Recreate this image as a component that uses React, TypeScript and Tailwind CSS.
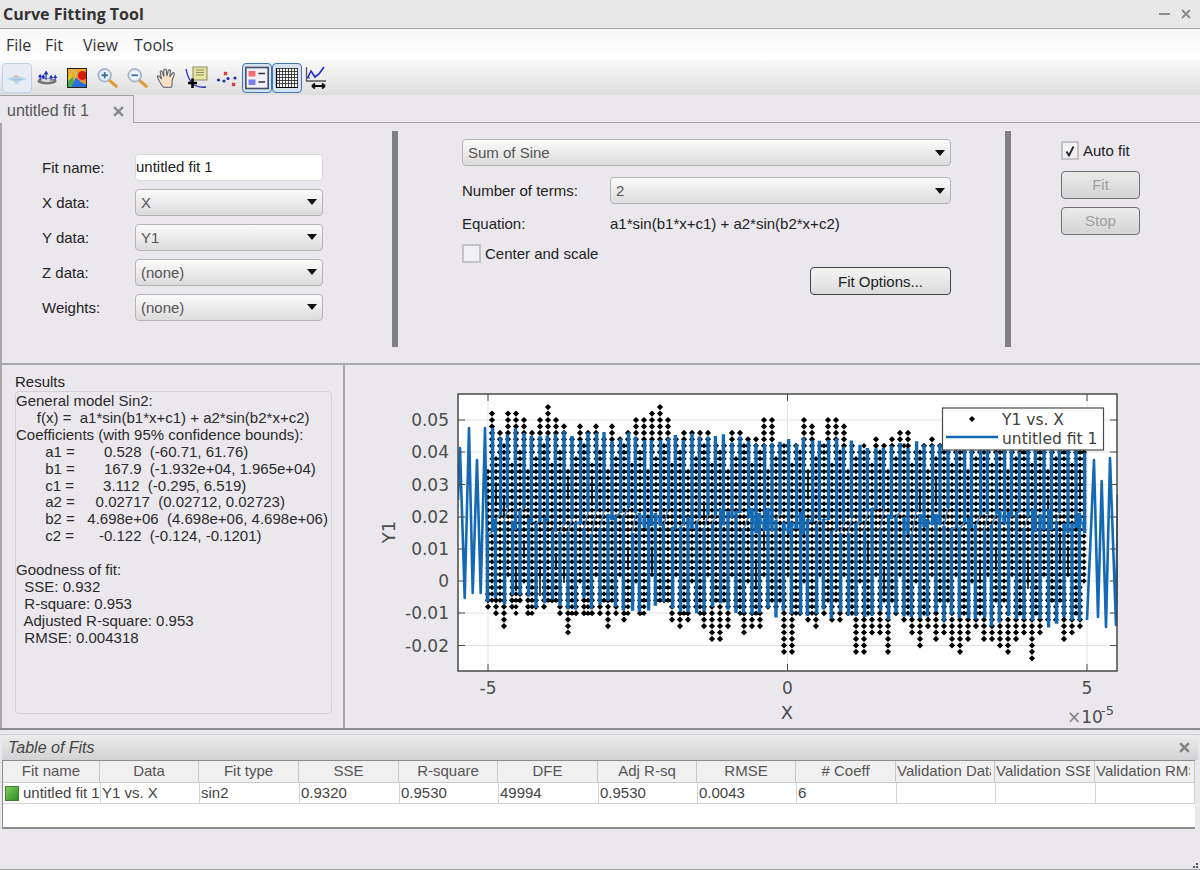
import React from "react";

const tops: number[] = [26,23,26,26,25,23,25,27,25,24,22,24,23,24,22,24,22,23,25,25,26,27,25,22,23,23,23,23,21,21,23,23,22,22,25,25,21,21,21,25,24,21,25,25,24,21,20,20,22,21,22,23,23,20,21,22,21,21,21,21,21,21,21,21,21,21,21,21,21,21,21,21,21,21,21];
const bottoms: number[] = [4,5,7,4,3,5,4,4,3,5,8,5,5,5,5,7,5,6,3,5,3,3,3,6,7,6,4,7,9,9,7,4,8,7,7,4,4,11,11,5,6,7,5,6,6,5,11,11,8,8,11,5,6,8,10,7,9,8,10,11,9,7,9,9,10,11,9,8,12,8,6,6,9,8,7];

const levelY = (n: number) => 581 - n * 6.44;
const diamond = (x: number, y: number, r = 3.1) => `M${x} ${y - r}L${x + r} ${y}L${x} ${y + r}L${x - r} ${y}Z`;
const hash = (i: number, m: number) => (i * 37 + 11 + ((i * i) % 7) * 5) % m;

function buildDots() {
  let d = "";
  tops.forEach((t, j) => {
    const x = 492 + 8 * j;
    const low = 1 - hash(j, 7);
    for (let n = t; n >= low; n--) d += diamond(x, levelY(n), n > 19 ? 3.1 : 2.7);
  });
  bottoms.forEach((b, k) => {
    const x = 488 + 8 * k;
    const high = 17 + hash(k + 2, 5);
    for (let n = -b; n <= high; n++) d += diamond(x, levelY(n), n < -1 ? 3.1 : 2.7);
  });
  return d;
}

function buildDarkBars() {
  let d = "";
  for (let j = 0; j < 75; j++) {
    const h = hash(j, 13);
    if (h < 5) {
      const x = 488 + 8 * j + (h % 2 ? 0 : 4);
      const y0 = (h % 2 ? 470 : 530) + ((j * 53) % 40);
      d += `M${x} ${y0}V${y0 + 16 + h * 3}`;
    }
  }
  return d;
}

function buildBars() {
  let thick = "";
  let thin = "";
  for (let j = 0; j < 75; j++) {
    const xj = 492 + 8 * j;
    const xk = 488 + 8 * j;
    const top = 428 + (j / 75) * 16 + hash(j, 11);
    const midTop = 508 + hash(j + 3, 27);
    const bottom = 594 + (j / 75) * 24 + hash(j + 5, 13);
    const midBottom = 534 - hash(j + 7, 27);
    const shift = (hash(j, 3) - 1) * 0.6;
    thick += `M${xj + shift} ${top.toFixed(1)}V${midTop}`;
    thick += `M${xk - shift} ${bottom.toFixed(1)}V${midBottom}`;
    thin += `M${xk} ${midBottom}L${xj} ${midTop}`;
  }
  return { thick, thin };
}

const bars = buildBars();
const leftEdge = "M458 500L460 448L464.7 598L469 428L472.7 593L477 460L480.7 593L485 428L488 600";
const rightEdge = "M1087 620L1094 460L1098 617L1101.7 481L1106 627L1110 458L1116 625L1118 495";

const dotsPath = buildDots();
const barsPath = buildDarkBars();

const yTicks: [string, number][] = [["0.05", 420], ["0.04", 452], ["0.03", 484.5], ["0.02", 517], ["0.01", 549], ["0", 581], ["-0.01", 613], ["-0.02", 645.5]];
const xTicks: [string, number][] = [["-5", 488], ["0", 787.5], ["5", 1087]];

function Chart() {
  const font = "DejaVu Sans, sans-serif";
  return (
    <svg viewBox="345 365 855 363" className="block w-[855px] h-[363px]">
      <rect x="458" y="394" width="659" height="277" fill="#ffffff" />
      {yTicks.map(([, y]) => <line key={y} x1="458" x2="1117" y1={y} y2={y} stroke="#e2e2e2" strokeWidth="1" />)}
      {xTicks.map(([, x]) => <line key={x} x1={x} x2={x} y1="394" y2="671" stroke="#e2e2e2" strokeWidth="1" />)}
      <clipPath id="axes"><rect x="458" y="394" width="660" height="277" /></clipPath>
      <g clipPath="url(#axes)">
        <path d={dotsPath} fill="#000000" />
        <path d={barsPath} stroke="#111111" strokeWidth="1.6" fill="none" />
        <path d={bars.thin} stroke="#3f86c8" strokeWidth="1.6" fill="none" />
        <path d={bars.thick} stroke="#1469b4" strokeWidth="3.4" fill="none" />
        <path d={leftEdge} stroke="#1469b4" strokeWidth="2.6" fill="none" strokeLinejoin="round" />
        <path d={rightEdge} stroke="#1469b4" strokeWidth="2.6" fill="none" strokeLinejoin="round" />
      </g>
      <rect x="458" y="394" width="659" height="277" fill="none" stroke="#4a4a4a" strokeWidth="1.5" />
      {yTicks.map(([, y]) => (
        <g key={y}>
          <line x1="458" x2="465" y1={y} y2={y} stroke="#4a4a4a" />
          <line x1="1110" x2="1117" y1={y} y2={y} stroke="#4a4a4a" />
        </g>
      ))}
      {xTicks.map(([, x]) => (
        <g key={x}>
          <line x1={x} x2={x} y1="394" y2="401" stroke="#4a4a4a" />
          <line x1={x} x2={x} y1="664" y2="671" stroke="#4a4a4a" />
        </g>
      ))}
      {yTicks.map(([t, y]) => (
        <text key={t} x="449" y={y + 6} textAnchor="end" fontSize="17" fontFamily={font} fill="#4d4d4d">{t}</text>
      ))}
      {xTicks.map(([t, x]) => (
        <text key={t} x={x} y="694" textAnchor="middle" fontSize="17" fontFamily={font} fill="#4d4d4d">{t}</text>
      ))}
      <text x="787" y="719" textAnchor="middle" fontSize="18" fontFamily={font} fill="#4d4d4d">X</text>
      <text x="395" y="532" textAnchor="middle" fontSize="18" fontFamily={font} fill="#4d4d4d" transform="rotate(-90 395 532)">Y1</text>
      <text x="1067" y="723" fontSize="17" fontFamily={font} fill="#4d4d4d"><tspan fill="#808080">×</tspan>10</text>
      <text x="1101" y="715" fontSize="13" fontFamily={font} fill="#4d4d4d">-5</text>
      <rect x="942.5" y="408" width="161" height="42" fill="#ffffff" stroke="#4a4a4a" strokeWidth="1.2" />
      <path d={diamond(972, 419)} fill="#000000" />
      <line x1="946" x2="998" y1="437" y2="437" stroke="#1469b4" strokeWidth="2.4" />
      <text x="1002" y="425" fontSize="15.5" fontFamily={font} fill="#404040">Y1 vs. X</text>
      <text x="1002" y="444" fontSize="15.5" fontFamily={font} fill="#404040">untitled fit 1</text>
    </svg>
  );
}

const IconData = () => (
  <svg viewBox="0 0 24 24" className="w-[22px] h-[22px]">
    <path d="M1 13L11 9L23 13L12 17Z" fill="#b6dbe6" />
    <path d="M4 13H20L12 15Z" fill="#9cc6d8" />
    <path d="M8 11Q11 6 14 11Q11 13 8 11Z" fill="#e8b7c0" />
    <path d="M10 15H14V19H10Z" fill="#a9cfe0" opacity="0.6" />
  </svg>
);
const IconArrows = () => (
  <svg viewBox="0 0 24 24" className="w-[22px] h-[22px]">
    <ellipse cx="12" cy="15.5" rx="10.5" ry="3.6" fill="#777777" />
    <ellipse cx="12" cy="14.5" rx="6.5" ry="1.8" fill="#dcdcdc" />
    <g stroke="#1c2fc0" strokeWidth="1.2" fill="#1c2fc0">
      <path d="M11 14V5.5M9.5 7.5L11 5L12.5 7.5Z" />
      <path d="M4.5 14V9.5M3.3 10.5L4.5 8.5L5.7 10.5Z" />
      <path d="M16.5 15V10.5M15.3 11.5L16.5 9.5L17.7 11.5Z" />
      <path d="M21 14V10.5M19.8 11.5L21 9.5L22.2 11.5Z" />
      <path d="M8 13V10M6.8 11L8 9L9.2 11Z" />
    </g>
  </svg>
);
const IconMap = () => (
  <svg viewBox="0 0 20 20" className="w-5 h-5">
    <rect width="20" height="20" fill="#f5a62a" />
    <path d="M0 8L5 5L6 14L0 20Z" fill="#d8c82a" />
    <path d="M0 14L6 9L8 20H0Z" fill="#4aa84e" />
    <path d="M4 20L9 9L14 14L20 17V20Z" fill="#2a6ee0" />
    <path d="M8 9L12 3L20 8V16L14 13Z" fill="#f08a2c" />
    <circle cx="15.5" cy="7.5" r="4.5" fill="#d81d14" />
    <path d="M4 2L10 5L8 10" stroke="#8fdcc8" fill="none" strokeWidth="1" />
    <path d="M0 0H20V1H0ZM0 19H20V20H0ZM0 0H1V20H0ZM19 0H20V20H19Z" fill="#222222" />
  </svg>
);
const IconZoom = ({ minus }: { minus?: boolean }) => (
  <svg viewBox="0 0 24 24" className="w-[22px] h-[22px]">
    <path d="M14 14L22 21" stroke="#dd9a3e" strokeWidth="3.4" strokeLinecap="round" />
    <circle cx="9.5" cy="9" r="7" fill="#dcebf7" stroke="#a8b4cf" strokeWidth="1.8" />
    <circle cx="9.5" cy="9" r="4.5" fill="#f3f8fc" />
    <path d={minus ? "M6 9H13" : "M6 9H13M9.5 5.5V12.5"} stroke="#3d6ea8" strokeWidth="2" />
  </svg>
);
const IconHand = () => (
  <svg viewBox="0 0 24 24" className="w-[22px] h-[22px]">
    <path d="M7 21Q3 15 1.5 11Q1.5 9 3.5 10L6 13L4.5 5Q5 3.5 6.5 4.5L8.5 10L8.5 3Q10 1.5 11.2 3L12 9.5L13.5 3.5Q15 2.5 15.8 4L15.2 10.5L18.5 6Q20.2 6 20 8L17.5 15Q18 19 17 22H8Z" fill="#f8e2c4" stroke="#53586e" strokeWidth="1.1" strokeLinejoin="round" />
  </svg>
);
const IconCursor = () => (
  <svg viewBox="0 0 24 24" className="w-6 h-6">
    <path d="M1 3Q3 14 9 19Q15 22 21 21" fill="none" stroke="#2329c6" strokeWidth="1.3" />
    <rect x="8" y="1" width="14" height="13" fill="#e6e49a" stroke="#8a8a60" strokeWidth="1" />
    <path d="M11 4H19M11 6.5H19M11 9H19" stroke="#8c8c6a" strokeWidth="1" />
    <path d="M3 17H12M7.5 12.5V22" stroke="#000000" strokeWidth="2.6" />
  </svg>
);
const IconOutlier = () => (
  <svg viewBox="0 0 24 24" className="w-6 h-6">
    <g fill="#1f2f9c">
      <circle cx="3.5" cy="14" r="1.6" />
      <circle cx="9" cy="15" r="1.6" />
      <circle cx="13" cy="12.5" r="1.6" />
      <circle cx="20" cy="12" r="1.6" />
    </g>
    <path d="M9 6L12 9M12 6L9 9M17 17L20 20M20 17L17 20" stroke="#d8262b" strokeWidth="1.5" />
  </svg>
);
const IconLegend = () => (
  <svg viewBox="0 0 24 24" className="w-6 h-6">
    <rect x="0.8" y="1.5" width="22.4" height="21" fill="#f0f0f6" stroke="#46506a" strokeWidth="1.6" />
    <rect x="3.5" y="5" width="7" height="5.5" fill="#ef6f74" />
    <rect x="3.5" y="13.5" width="7" height="5.5" fill="#7a80ee" />
    <path d="M13.5 7.5H20M13.5 16H20" stroke="#333333" strokeWidth="1.6" />
  </svg>
);
const IconGrid = () => (
  <svg viewBox="0 0 24 24" className="w-6 h-6">
    <rect x="1" y="2" width="22" height="20" fill="#f6f6f6" />
    <path d="M1 2.5H23M1 5.5H23M1 8.5H23M1 11.5H23M1 14.5H23M1 17.5H23M1 21.5H23M1.5 2V22M4.5 2V22M7.5 2V22M10.5 2V22M13.5 2V22M16.5 2V22M19.5 2V22M22.5 2V22" stroke="#222222" strokeWidth="0.8" />
    <path d="M1 21.5H23M1.5 2V22" stroke="#000000" strokeWidth="1.2" />
  </svg>
);
const IconResid = () => (
  <svg viewBox="0 0 24 24" className="w-6 h-6">
    <path d="M1.5 1V15H21" stroke="#555555" strokeWidth="1.3" fill="none" />
    <path d="M2.5 12L6 5L10 11L14 8L19 1" stroke="#1c2bc4" strokeWidth="1.6" fill="none" />
    <path d="M2.5 12H5" stroke="#1c2bc4" strokeWidth="1" />
    <path d="M7 20H20M7 20L10 17.5M7 20L10 22.5M20 20L17 17.5M20 20L17 22.5" stroke="#111111" strokeWidth="1.8" fill="none" />
  </svg>
);

const Caret = () => (
  <svg viewBox="0 0 10 6" className="w-[10px] h-[6px] shrink-0">
    <path d="M0 0H10L5 6Z" fill="#111111" />
  </svg>
);

function Select({ value, className }: { value: string; className: string }) {
  return (
    <div className={`${className} flex items-center justify-between pl-[5px] pr-[5px] rounded-[4px] border border-[#b4b4b4] bg-gradient-to-b from-[#fbfbfb] to-[#dcdcdc] text-[#555555] text-[15px]`}>
      <span className="pt-[2px]">{value}</span>
      <Caret />
    </div>
  );
}

const ToolBtn = ({ children, on, soft }: { children: React.ReactNode; on?: boolean; soft?: boolean }) => (
  <div className={`w-[30px] h-[30px] flex items-center justify-center rounded-[4px] border ${on ? "border-[#3f74b8] bg-[#d6e2f0]" : soft ? "border-[#bcd0e6] bg-[#e8ecf4]" : "border-transparent"}`}>
    {children}
  </div>
);

const leftRows: [string, string][] = [["X data:", "X"], ["Y data:", "Y1"], ["Z data:", "(none)"], ["Weights:", "(none)"]];

const resultLines = [
  "General model Sin2:",
  "     f(x) =  a1*sin(b1*x+c1) + a2*sin(b2*x+c2)",
  "Coefficients (with 95% confidence bounds):",
  "       a1 =       0.528  (-60.71, 61.76)",
  "       b1 =       167.9  (-1.932e+04, 1.965e+04)",
  "       c1 =       3.112  (-0.295, 6.519)",
  "       a2 =     0.02717  (0.02712, 0.02723)",
  "       b2 =   4.698e+06  (4.698e+06, 4.698e+06)",
  "       c2 =      -0.122  (-0.124, -0.1201)",
  " ",
  "Goodness of fit:",
  "  SSE: 0.932",
  "  R-square: 0.953",
  "  Adjusted R-square: 0.953",
  "  RMSE: 0.004318",
];

const columns: [string, string, string, string][] = [
  ["Fit name", "untitled fit 1", "w-[97px]", "w-[98px]"],
  ["Data", "Y1 vs. X", "w-[99px]", "w-[99px]"],
  ["Fit type", "sin2", "w-[100px]", "w-[100px]"],
  ["SSE", "0.9320", "w-[100px]", "w-[100px]"],
  ["R-square", "0.9530", "w-[99px]", "w-[99px]"],
  ["DFE", "49994", "w-[100px]", "w-[100px]"],
  ["Adj R-sq", "0.9530", "w-[99px]", "w-[99px]"],
  ["RMSE", "0.0043", "w-[99px]", "w-[99px]"],
  ["# Coeff", "6", "w-[100px]", "w-[100px]"],
  ["Validation Data", "", "w-[99px]", "w-[99px]"],
  ["Validation SSE", "", "w-[100px]", "w-[100px]"],
  ["Validation RMSE", "", "w-[100px]", "w-[99px]"],
];

export default function App() {
  return (
    <div className="w-[1200px] h-[870px] flex flex-col overflow-hidden bg-[#eae8ed] font-['Liberation_Sans',sans-serif] text-[15px] text-[#222222]">
      <div className="h-[29px] shrink-0 flex items-center justify-between pl-[3px] pr-[9px] bg-[#e8e8e8] border-b border-[#a3a3a3]">
        <span className="font-['Open_Sans',sans-serif] font-bold text-[16px] text-[#333333]">Curve Fitting Tool</span>
        <div className="flex items-center gap-[11px]">
          <div className="w-[11px] h-[2px] bg-[#8c8c8c]" />
          <svg viewBox="0 0 10 10" className="w-[10px] h-[10px]"><path d="M1 1L9 9M9 1L1 9" stroke="#8c8c8c" strokeWidth="2" /></svg>
        </div>
      </div>
      <div className="h-[31px] shrink-0 flex items-center pl-[6px] bg-gradient-to-b from-[#f7f7f7] to-[#ffffff] font-['Open_Sans',sans-serif] text-[16px] text-[#333333]">
        <span className="w-[39px]">File</span>
        <span className="w-[38px]">Fit</span>
        <span className="w-[51px]">View</span>
        <span>Tools</span>
      </div>
      <div className="h-[35px] shrink-0 flex items-center pl-[2px] bg-gradient-to-b from-[#fafafa] to-[#dedede]">
        <ToolBtn soft><IconData /></ToolBtn>
        <ToolBtn><IconArrows /></ToolBtn>
        <ToolBtn><IconMap /></ToolBtn>
        <ToolBtn><IconZoom /></ToolBtn>
        <ToolBtn><IconZoom minus /></ToolBtn>
        <ToolBtn><IconHand /></ToolBtn>
        <ToolBtn><IconCursor /></ToolBtn>
        <ToolBtn><IconOutlier /></ToolBtn>
        <ToolBtn on><IconLegend /></ToolBtn>
        <ToolBtn on><IconGrid /></ToolBtn>
        <ToolBtn><IconResid /></ToolBtn>
      </div>
      <div className="h-[28px] shrink-0 flex border-b border-[#a3a3a3] bg-[#eae8ed]">
        <div className="w-[134px] h-[28px] flex items-center justify-between pl-[7px] pr-[9px] pt-[2px] border-t border-r border-[#a3a3a3] bg-[#eae8ed] text-[16px] text-[#555555]">
          <span>untitled fit 1</span>
          <svg viewBox="0 0 10 10" className="w-[11px] h-[11px] mt-[2px]"><path d="M1 1L9 9M9 1L1 9" stroke="#8a8a8a" strokeWidth="2.2" /></svg>
        </div>
      </div>

      <div className="h-[242px] shrink-0 flex border-l-2 border-b-2 border-[#a8a8a8]">
        <div className="w-[390px] shrink-0 pl-[40px] pt-[31px] flex flex-col gap-[9px]">
          <div className="flex items-center h-[26px]">
            <span className="w-[93px] pt-[2px]">Fit name:</span>
            <div className="w-[188px] h-[27px] flex items-center rounded-[4px] bg-white border border-[#d8d8d8]">untitled fit 1</div>
          </div>
          {leftRows.map(([label, value]) => (
            <div key={label} className="flex items-center h-[26px]">
              <span className="w-[93px] pt-[3px]">{label}</span>
              <Select value={value} className="w-[188px] h-[27px]" />
            </div>
          ))}
        </div>
        <div className="w-[6px] h-[216px] mt-[8px] shrink-0 bg-[#808080]" />
        <div className="w-[607px] shrink-0 pl-[64px] pt-[16px] flex flex-col items-start">
          <Select value="Sum of Sine" className="w-[489px] h-[27px]" />
          <div className="flex items-center mt-[11px] h-[27px]">
            <span className="w-[148px] pt-[1px]">Number of terms:</span>
            <Select value="2" className="w-[341px] h-[27px]" />
          </div>
          <div className="flex items-center mt-[7px] h-[26px]">
            <span className="w-[148px]">Equation:</span>
            <span>a1*sin(b1*x+c1) + a2*sin(b2*x+c2)</span>
          </div>
          <div className="flex items-center mt-[6px] h-[20px] gap-[4px]">
            <div className="w-[19px] h-[19px] border-2 border-[#c4c4c4] bg-[#f1f0f3]" />
            <span className="pt-[2px]">Center and scale</span>
          </div>
          <div className="w-[489px] flex justify-end mt-[4px]">
            <div className="w-[141px] h-[28px] flex items-center justify-center pt-[2px] rounded-[4px] border border-[#444444] bg-gradient-to-b from-[#f4f4f4] to-[#dcdcdc]">Fit Options...</div>
          </div>
        </div>
        <div className="w-[6px] h-[216px] mt-[8px] shrink-0 bg-[#808080]" />
        <div className="pl-[50px] pt-[18px] flex flex-col items-start">
          <div className="flex items-center gap-[4px] h-[19px]">
            <div className="w-[18px] h-[19px] flex items-center justify-center border-2 border-[#c4c4c4] bg-[#f1f0f3]">
              <svg viewBox="0 0 12 12" className="w-[12px] h-[12px]"><path d="M2.5 6.5L5 10.5L9.5 1.5" fill="none" stroke="#222222" strokeWidth="1.8" /></svg>
            </div>
            <span className="pt-[2px]">Auto fit</span>
          </div>
          <div className="w-[79px] h-[28px] mt-[11px] flex items-center justify-center rounded-[4px] border border-[#707070] bg-gradient-to-b from-[#ebebeb] to-[#d4d4d4] text-[#a0a0a0]">Fit</div>
          <div className="w-[79px] h-[28px] mt-[8px] flex items-center justify-center pt-[1px] rounded-[4px] border border-[#707070] bg-gradient-to-b from-[#ebebeb] to-[#d4d4d4] text-[#a0a0a0]">Stop</div>
        </div>
      </div>

      <div className="h-[363px] shrink-0 flex">
        <div className="w-[345px] shrink-0 border-r-2 border-l-2 border-[#a8a8a8] pl-[13px] pr-[11px] pt-[8px] flex flex-col">
          <div className="h-[18px] text-[15px] leading-[17px]">Results</div>
          <div className="h-[323px] rounded-[4px] border border-[#d4d2d8] pt-[1px] text-[15px] leading-[16.9px] text-[#2a2a2a] whitespace-pre">
            {resultLines.map((l, i) => <div key={i}>{l}</div>)}
          </div>
        </div>
        <Chart />
      </div>

      <div className="flex-1 flex flex-col border-t-2 border-[#8c8c8c] relative">
        <div className="h-[5px] border-b border-[#cfcfcf]" />
        <div className="h-[25px] shrink-0 flex items-center justify-between pl-[6px] pr-[8px] mx-[2px] bg-gradient-to-b from-[#ececec] to-[#d2d2d4] italic text-[16px] text-[#444444]">
          <span>Table of Fits</span>
          <svg viewBox="0 0 10 10" className="w-[11px] h-[11px]"><path d="M1 1L9 9M9 1L1 9" stroke="#808080" strokeWidth="2.2" /></svg>
        </div>
        <div className="ml-[2px] mr-[5px] h-[69px] bg-white border-t border-l border-b-2 border-[#8c8c8c] flex flex-col">
          <div className="h-[22px] flex bg-[#f0f0f0] border-b border-[#c8c8c8] text-[#555555] text-[15px]">
            {columns.map(([h, , w]) => (
              <div key={h} className={`${w} shrink-0 h-full flex items-center border-r border-[#c8c8c8] whitespace-nowrap ${h.startsWith("Validation") ? "justify-start pl-[1px]" : "justify-center"}`}>
                <span className="block max-w-[94px] overflow-hidden">{h}</span>
              </div>
            ))}
          </div>
          <div className="h-[21px] flex border-b border-[#d4d4d4] text-[#444444] text-[15px]">
            {columns.map(([h, v, , w], i) => (
              <div key={h} className={`${w} shrink-0 h-full flex items-center border-r border-[#d4d4d4] pl-[1px] overflow-hidden whitespace-nowrap`}>
                {i === 0 && <span className="w-[14px] h-[15px] ml-[1px] mr-[4px] shrink-0 border border-[#3f7f2f] bg-gradient-to-br from-[#7ccc5c] to-[#2f8f22]" />}
                {v}
              </div>
            ))}
          </div>
        </div>
        <div className="absolute right-[2px] bottom-[2px] grid grid-cols-2 gap-[1px]">
          <span className="w-[2px] h-[2px]" />
          <span className="w-[2px] h-[2px] bg-[#555555]" />
          <span className="w-[2px] h-[2px] bg-[#555555]" />
          <span className="w-[2px] h-[2px] bg-[#555555]" />
        </div>
        <div className="absolute left-0 right-0 bottom-0 h-[1px] bg-[#a3a3a3]" />
      </div>
    </div>
  );
}
